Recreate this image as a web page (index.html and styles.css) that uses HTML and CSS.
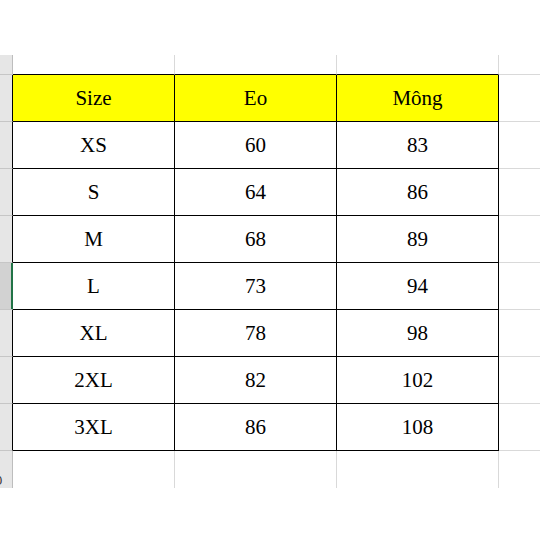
FILE: index.html
```html
<!DOCTYPE html>
<html>
<head>
<meta charset="utf-8">
<link rel="stylesheet" href="styles.css">
</head>
<body>
<div class="sheet">
  <div class="rh"></div><div class="c top"></div><div class="c top"></div><div class="c top"></div><div class="c end"></div>

  <div class="rh"></div><div class="c t hd">Size</div><div class="c t hd">Eo</div><div class="c t hd">Mông</div><div class="c end"></div>
  <div class="rh"></div><div class="c t">XS</div><div class="c t">60</div><div class="c t">83</div><div class="c end"></div>
  <div class="rh"></div><div class="c t">S</div><div class="c t">64</div><div class="c t">86</div><div class="c end"></div>
  <div class="rh"></div><div class="c t">M</div><div class="c t">68</div><div class="c t">89</div><div class="c end"></div>
  <div class="rh sel"></div><div class="c t">L</div><div class="c t">73</div><div class="c t">94</div><div class="c end"></div>
  <div class="rh"></div><div class="c t">XL</div><div class="c t">78</div><div class="c t">98</div><div class="c end"></div>
  <div class="rh"></div><div class="c t">2XL</div><div class="c t">82</div><div class="c t">102</div><div class="c end"></div>
  <div class="rh"></div><div class="c t">3XL</div><div class="c t">86</div><div class="c t">108</div><div class="c end"></div>

  <div class="rh last"><span class="num">0</span></div><div class="c"></div><div class="c"></div><div class="c"></div><div class="c end"></div>
</div>
</body>
</html>
```
FILE: styles.css
```css
html, body {
  margin: 0;
  padding: 0;
  background: #fff;
}
.sheet {
  margin-top: 55px;
  display: grid;
  grid-template-columns: 13px 162px 162px 162px 41px;
  grid-template-rows: 20px repeat(8, 47px) 37px;
  width: 540px;
  font-family: "Liberation Serif", "Times New Roman", serif;
  font-size: 21px;
  color: #000;
  overflow: hidden;
}
.sheet > div {
  box-sizing: border-box;
}
.rh {
  background: #e6e6e6;
  border-right: 1px solid #000;
  border-bottom: 1px solid #c6c6c6;
  overflow: hidden;
}
.rh:first-child {
  border-right-color: #bdbdbd;
}
.rh.sel {
  background: #d2d2d2;
  border-right: 1px solid #217346;
  box-shadow: inset -1px 0 0 #217346;
}
.rh.last {
  border-right-color: #bdbdbd;
  border-bottom: none;
  position: relative;
}
.num {
  position: absolute;
  left: -5px;
  top: 22px;
  font-family: "Liberation Sans", Arial, sans-serif;
  font-size: 13px;
  color: #333;
}
.c {
  border-right: 1px solid #d9d9d9;
  border-bottom: 1px solid #d9d9d9;
  display: flex;
  align-items: center;
  justify-content: center;
}
.c.top {
  border-bottom-color: #000;
}
.c.t {
  border-right-color: #000;
  border-bottom-color: #000;
}
.c.hd {
  background: #ffff00;
}
.c.end {
  border-right: none;
}
.sheet > div:nth-last-child(-n+5) {
  border-bottom: none;
}
```
